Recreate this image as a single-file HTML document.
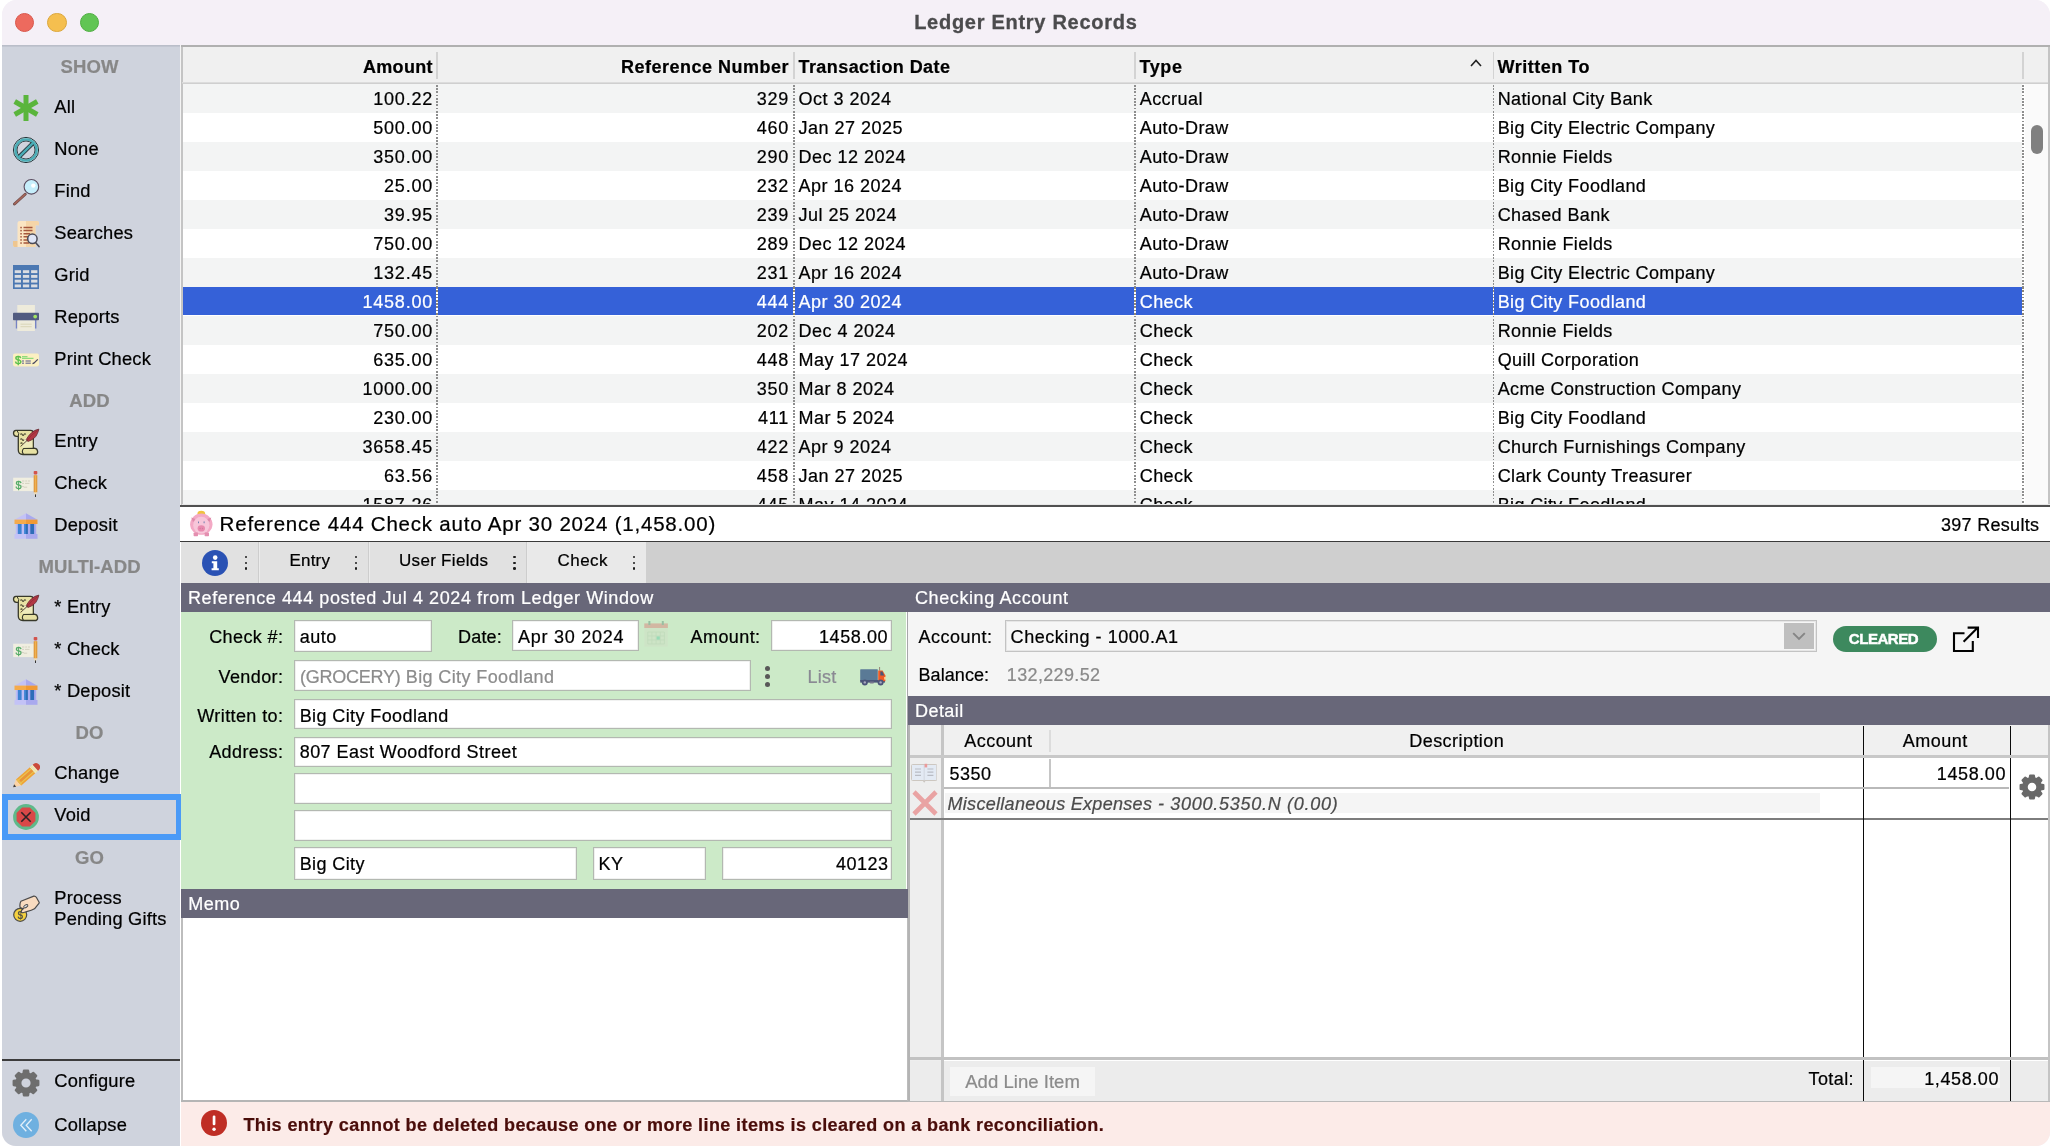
<!DOCTYPE html>
<html lang="en"><head><meta charset="utf-8"><title>Ledger Entry Records</title>
<style>
html,body{margin:0;padding:0;background:#fff;}
body{width:2050px;height:1146px;overflow:hidden;position:relative;font-family:"Liberation Sans",sans-serif;color:#000;}
#win{position:absolute;left:2px;top:0;width:2048px;height:1146px;border-radius:15px 15px 14px 14px;overflow:hidden;background:#f5f0f7;}
#win div,#win svg{position:absolute;box-sizing:border-box;}
.t{white-space:nowrap;-webkit-text-stroke:0.22px currentColor;}
#lay{will-change:transform;}
</style></head>
<body>
<div id="win"><div id="lay" style="left:-2px;top:0;width:2050px;height:1146px;">
<div style="left:0px;top:0px;width:2050px;height:45px;background:#f5f0f7;"></div>
<div style="left:14.850000000000001px;top:12.850000000000001px;width:19.5px;height:19.5px;background:#ed6a5e;border-radius:50%;border:0.8px solid #d9574c;"></div>
<div style="left:47.25px;top:12.850000000000001px;width:19.5px;height:19.5px;background:#f5bf4f;border-radius:50%;border:0.8px solid #dca73b;"></div>
<div style="left:79.65px;top:12.850000000000001px;width:19.5px;height:19.5px;background:#61c554;border-radius:50%;border:0.8px solid #4fae42;"></div>
<div class="t" style="top:12px;font-size:20px;line-height:20px;left:525.5px;width:1000px;text-align:center;text-indent:0.72px;font-weight:bold;color:#4b4b4d;letter-spacing:0.72px;-webkit-text-stroke:0.3px #4b4b4d;">Ledger Entry Records</div>
<div style="left:0px;top:45px;width:180px;height:1101px;background:#cfd3dd;"></div>
<div style="left:0px;top:45px;width:180px;height:1.6px;background:linear-gradient(to bottom,#b6bac5,#c6cad5);"></div>
<div style="left:180px;top:45px;width:1870px;height:1101px;background:#fff;"></div>
<div style="left:180px;top:45px;width:2px;height:462px;background:#f4f4f4;"></div>
<div style="left:182px;top:47px;width:1868px;height:36px;background:#f0f0f0;"></div>
<div style="left:181.3px;top:45px;width:1869px;height:2px;background:#b0b0b0;"></div>
<div style="left:181.3px;top:46.5px;width:1.6px;height:458px;background:#c4c4c4;"></div>
<div style="left:182px;top:82px;width:1868px;height:1px;background:#dcdcdc;"></div>
<div style="left:182px;top:83px;width:1868px;height:1px;background:#cfcfcf;"></div>
<div style="left:436.4px;top:52px;width:1.6px;height:27px;background:#d3d3d3;"></div>
<div style="left:793.2px;top:52px;width:1.6px;height:27px;background:#d3d3d3;"></div>
<div style="left:1134.0px;top:52px;width:1.6px;height:27px;background:#d3d3d3;"></div>
<div style="left:1492.8px;top:52px;width:1.6px;height:27px;background:#d3d3d3;"></div>
<div style="left:2022.3px;top:52px;width:1.6px;height:27px;background:#d3d3d3;"></div>
<div class="t" style="top:58px;font-size:18px;line-height:18px;right:1617.5px;margin-right:-0.3px;font-weight:bold;letter-spacing:0.3px;">Amount</div>
<div class="t" style="top:58px;font-size:18px;line-height:18px;right:1261.5px;margin-right:-0.5px;font-weight:bold;letter-spacing:0.5px;">Reference Number</div>
<div class="t" style="top:58px;font-size:18px;line-height:18px;left:798.5px;font-weight:bold;letter-spacing:0.43px;">Transaction Date</div>
<div class="t" style="top:58px;font-size:18px;line-height:18px;left:1139.5px;font-weight:bold;letter-spacing:0.6px;">Type</div>
<div class="t" style="top:58px;font-size:18px;line-height:18px;left:1497.5px;font-weight:bold;letter-spacing:0.52px;">Written To</div>
<svg style="left:1469px;top:58px" width="14" height="10" viewBox="0 0 14 10"><path d="M2 8 L7 2.5 L12 8" fill="none" stroke="#222" stroke-width="1.6"/></svg>
<div style="left:183px;top:84px;width:1841px;height:420px;overflow:hidden;background:#fff;"><div style="left:0px;top:0px;width:1838.5px;height:29px;background:#f3f4f4;"></div><div class="t" style="right:1591.7px;top:6px;font-size:18px;line-height:18px;letter-spacing:0.8px;margin-right:-0.8px;">100.22</div><div class="t" style="right:1235.7px;top:6px;font-size:18px;line-height:18px;letter-spacing:0.8px;margin-right:-0.8px;">329</div><div class="t" style="left:615.5px;top:6px;font-size:18px;line-height:18px;letter-spacing:0.5px;">Oct 3 2024</div><div class="t" style="left:956.7px;top:6px;font-size:18px;line-height:18px;letter-spacing:0.45px;">Accrual</div><div class="t" style="left:1314.7px;top:6px;font-size:18px;line-height:18px;letter-spacing:0.38px;">National City Bank</div><div class="t" style="right:1591.7px;top:35px;font-size:18px;line-height:18px;letter-spacing:0.8px;margin-right:-0.8px;">500.00</div><div class="t" style="right:1235.7px;top:35px;font-size:18px;line-height:18px;letter-spacing:0.8px;margin-right:-0.8px;">460</div><div class="t" style="left:615.5px;top:35px;font-size:18px;line-height:18px;letter-spacing:0.5px;">Jan 27 2025</div><div class="t" style="left:956.7px;top:35px;font-size:18px;line-height:18px;letter-spacing:0.45px;">Auto-Draw</div><div class="t" style="left:1314.7px;top:35px;font-size:18px;line-height:18px;letter-spacing:0.38px;">Big City Electric Company</div><div style="left:0px;top:58px;width:1838.5px;height:29px;background:#f3f4f4;"></div><div class="t" style="right:1591.7px;top:64px;font-size:18px;line-height:18px;letter-spacing:0.8px;margin-right:-0.8px;">350.00</div><div class="t" style="right:1235.7px;top:64px;font-size:18px;line-height:18px;letter-spacing:0.8px;margin-right:-0.8px;">290</div><div class="t" style="left:615.5px;top:64px;font-size:18px;line-height:18px;letter-spacing:0.5px;">Dec 12 2024</div><div class="t" style="left:956.7px;top:64px;font-size:18px;line-height:18px;letter-spacing:0.45px;">Auto-Draw</div><div class="t" style="left:1314.7px;top:64px;font-size:18px;line-height:18px;letter-spacing:0.38px;">Ronnie Fields</div><div class="t" style="right:1591.7px;top:93px;font-size:18px;line-height:18px;letter-spacing:0.8px;margin-right:-0.8px;">25.00</div><div class="t" style="right:1235.7px;top:93px;font-size:18px;line-height:18px;letter-spacing:0.8px;margin-right:-0.8px;">232</div><div class="t" style="left:615.5px;top:93px;font-size:18px;line-height:18px;letter-spacing:0.5px;">Apr 16 2024</div><div class="t" style="left:956.7px;top:93px;font-size:18px;line-height:18px;letter-spacing:0.45px;">Auto-Draw</div><div class="t" style="left:1314.7px;top:93px;font-size:18px;line-height:18px;letter-spacing:0.38px;">Big City Foodland</div><div style="left:0px;top:116px;width:1838.5px;height:29px;background:#f3f4f4;"></div><div class="t" style="right:1591.7px;top:122px;font-size:18px;line-height:18px;letter-spacing:0.8px;margin-right:-0.8px;">39.95</div><div class="t" style="right:1235.7px;top:122px;font-size:18px;line-height:18px;letter-spacing:0.8px;margin-right:-0.8px;">239</div><div class="t" style="left:615.5px;top:122px;font-size:18px;line-height:18px;letter-spacing:0.5px;">Jul 25 2024</div><div class="t" style="left:956.7px;top:122px;font-size:18px;line-height:18px;letter-spacing:0.45px;">Auto-Draw</div><div class="t" style="left:1314.7px;top:122px;font-size:18px;line-height:18px;letter-spacing:0.38px;">Chased Bank</div><div class="t" style="right:1591.7px;top:151px;font-size:18px;line-height:18px;letter-spacing:0.8px;margin-right:-0.8px;">750.00</div><div class="t" style="right:1235.7px;top:151px;font-size:18px;line-height:18px;letter-spacing:0.8px;margin-right:-0.8px;">289</div><div class="t" style="left:615.5px;top:151px;font-size:18px;line-height:18px;letter-spacing:0.5px;">Dec 12 2024</div><div class="t" style="left:956.7px;top:151px;font-size:18px;line-height:18px;letter-spacing:0.45px;">Auto-Draw</div><div class="t" style="left:1314.7px;top:151px;font-size:18px;line-height:18px;letter-spacing:0.38px;">Ronnie Fields</div><div style="left:0px;top:174px;width:1838.5px;height:29px;background:#f3f4f4;"></div><div class="t" style="right:1591.7px;top:180px;font-size:18px;line-height:18px;letter-spacing:0.8px;margin-right:-0.8px;">132.45</div><div class="t" style="right:1235.7px;top:180px;font-size:18px;line-height:18px;letter-spacing:0.8px;margin-right:-0.8px;">231</div><div class="t" style="left:615.5px;top:180px;font-size:18px;line-height:18px;letter-spacing:0.5px;">Apr 16 2024</div><div class="t" style="left:956.7px;top:180px;font-size:18px;line-height:18px;letter-spacing:0.45px;">Auto-Draw</div><div class="t" style="left:1314.7px;top:180px;font-size:18px;line-height:18px;letter-spacing:0.38px;">Big City Electric Company</div><div style="left:0px;top:203px;width:1838.5px;height:28px;background:#3561d8;"></div><div class="t" style="right:1591.7px;top:209px;font-size:18px;line-height:18px;letter-spacing:0.8px;margin-right:-0.8px;color:#fff;">1458.00</div><div class="t" style="right:1235.7px;top:209px;font-size:18px;line-height:18px;letter-spacing:0.8px;margin-right:-0.8px;color:#fff;">444</div><div class="t" style="left:615.5px;top:209px;font-size:18px;line-height:18px;letter-spacing:0.5px;color:#fff;">Apr 30 2024</div><div class="t" style="left:956.7px;top:209px;font-size:18px;line-height:18px;letter-spacing:0.45px;color:#fff;">Check</div><div class="t" style="left:1314.7px;top:209px;font-size:18px;line-height:18px;letter-spacing:0.38px;color:#fff;">Big City Foodland</div><div style="left:0px;top:232px;width:1838.5px;height:29px;background:#f3f4f4;"></div><div class="t" style="right:1591.7px;top:238px;font-size:18px;line-height:18px;letter-spacing:0.8px;margin-right:-0.8px;">750.00</div><div class="t" style="right:1235.7px;top:238px;font-size:18px;line-height:18px;letter-spacing:0.8px;margin-right:-0.8px;">202</div><div class="t" style="left:615.5px;top:238px;font-size:18px;line-height:18px;letter-spacing:0.5px;">Dec 4 2024</div><div class="t" style="left:956.7px;top:238px;font-size:18px;line-height:18px;letter-spacing:0.45px;">Check</div><div class="t" style="left:1314.7px;top:238px;font-size:18px;line-height:18px;letter-spacing:0.38px;">Ronnie Fields</div><div class="t" style="right:1591.7px;top:267px;font-size:18px;line-height:18px;letter-spacing:0.8px;margin-right:-0.8px;">635.00</div><div class="t" style="right:1235.7px;top:267px;font-size:18px;line-height:18px;letter-spacing:0.8px;margin-right:-0.8px;">448</div><div class="t" style="left:615.5px;top:267px;font-size:18px;line-height:18px;letter-spacing:0.5px;">May 17 2024</div><div class="t" style="left:956.7px;top:267px;font-size:18px;line-height:18px;letter-spacing:0.45px;">Check</div><div class="t" style="left:1314.7px;top:267px;font-size:18px;line-height:18px;letter-spacing:0.38px;">Quill Corporation</div><div style="left:0px;top:290px;width:1838.5px;height:29px;background:#f3f4f4;"></div><div class="t" style="right:1591.7px;top:296px;font-size:18px;line-height:18px;letter-spacing:0.8px;margin-right:-0.8px;">1000.00</div><div class="t" style="right:1235.7px;top:296px;font-size:18px;line-height:18px;letter-spacing:0.8px;margin-right:-0.8px;">350</div><div class="t" style="left:615.5px;top:296px;font-size:18px;line-height:18px;letter-spacing:0.5px;">Mar 8 2024</div><div class="t" style="left:956.7px;top:296px;font-size:18px;line-height:18px;letter-spacing:0.45px;">Check</div><div class="t" style="left:1314.7px;top:296px;font-size:18px;line-height:18px;letter-spacing:0.38px;">Acme Construction Company</div><div class="t" style="right:1591.7px;top:325px;font-size:18px;line-height:18px;letter-spacing:0.8px;margin-right:-0.8px;">230.00</div><div class="t" style="right:1235.7px;top:325px;font-size:18px;line-height:18px;letter-spacing:0.8px;margin-right:-0.8px;">411</div><div class="t" style="left:615.5px;top:325px;font-size:18px;line-height:18px;letter-spacing:0.5px;">Mar 5 2024</div><div class="t" style="left:956.7px;top:325px;font-size:18px;line-height:18px;letter-spacing:0.45px;">Check</div><div class="t" style="left:1314.7px;top:325px;font-size:18px;line-height:18px;letter-spacing:0.38px;">Big City Foodland</div><div style="left:0px;top:348px;width:1838.5px;height:29px;background:#f3f4f4;"></div><div class="t" style="right:1591.7px;top:354px;font-size:18px;line-height:18px;letter-spacing:0.8px;margin-right:-0.8px;">3658.45</div><div class="t" style="right:1235.7px;top:354px;font-size:18px;line-height:18px;letter-spacing:0.8px;margin-right:-0.8px;">422</div><div class="t" style="left:615.5px;top:354px;font-size:18px;line-height:18px;letter-spacing:0.5px;">Apr 9 2024</div><div class="t" style="left:956.7px;top:354px;font-size:18px;line-height:18px;letter-spacing:0.45px;">Check</div><div class="t" style="left:1314.7px;top:354px;font-size:18px;line-height:18px;letter-spacing:0.38px;">Church Furnishings Company</div><div class="t" style="right:1591.7px;top:383px;font-size:18px;line-height:18px;letter-spacing:0.8px;margin-right:-0.8px;">63.56</div><div class="t" style="right:1235.7px;top:383px;font-size:18px;line-height:18px;letter-spacing:0.8px;margin-right:-0.8px;">458</div><div class="t" style="left:615.5px;top:383px;font-size:18px;line-height:18px;letter-spacing:0.5px;">Jan 27 2025</div><div class="t" style="left:956.7px;top:383px;font-size:18px;line-height:18px;letter-spacing:0.45px;">Check</div><div class="t" style="left:1314.7px;top:383px;font-size:18px;line-height:18px;letter-spacing:0.38px;">Clark County Treasurer</div><div style="left:0px;top:406px;width:1838.5px;height:29px;background:#f3f4f4;"></div><div class="t" style="right:1591.7px;top:412px;font-size:18px;line-height:18px;letter-spacing:0.8px;margin-right:-0.8px;">1587.26</div><div class="t" style="right:1235.7px;top:412px;font-size:18px;line-height:18px;letter-spacing:0.8px;margin-right:-0.8px;">445</div><div class="t" style="left:615.5px;top:412px;font-size:18px;line-height:18px;letter-spacing:0.5px;">May 14 2024</div><div class="t" style="left:956.7px;top:412px;font-size:18px;line-height:18px;letter-spacing:0.45px;">Check</div><div class="t" style="left:1314.7px;top:412px;font-size:18px;line-height:18px;letter-spacing:0.38px;">Big City Foodland</div><div style="left:253.39999999999998px;top:1px;width:1.6px;height:420px;background:repeating-linear-gradient(to bottom,#8e8e8e 0,#8e8e8e 1.6px,transparent 1.6px,transparent 3.25px);"></div><div style="left:253.39999999999998px;top:203px;width:1.6px;height:28px;background:repeating-linear-gradient(to bottom,#8c8678 0,#8c8678 1.6px,#fff 1.6px,#fff 3.25px);"></div><div style="left:610.2px;top:1px;width:1.6px;height:420px;background:repeating-linear-gradient(to bottom,#8e8e8e 0,#8e8e8e 1.6px,transparent 1.6px,transparent 3.25px);"></div><div style="left:610.2px;top:203px;width:1.6px;height:28px;background:repeating-linear-gradient(to bottom,#8c8678 0,#8c8678 1.6px,#fff 1.6px,#fff 3.25px);"></div><div style="left:951.0px;top:1px;width:1.6px;height:420px;background:repeating-linear-gradient(to bottom,#8e8e8e 0,#8e8e8e 1.6px,transparent 1.6px,transparent 3.25px);"></div><div style="left:951.0px;top:203px;width:1.6px;height:28px;background:repeating-linear-gradient(to bottom,#8c8678 0,#8c8678 1.6px,#fff 1.6px,#fff 3.25px);"></div><div style="left:1309.8px;top:1px;width:1.6px;height:420px;background:repeating-linear-gradient(to bottom,#8e8e8e 0,#8e8e8e 1.6px,transparent 1.6px,transparent 3.25px);"></div><div style="left:1309.8px;top:203px;width:1.6px;height:28px;background:repeating-linear-gradient(to bottom,#8c8678 0,#8c8678 1.6px,#fff 1.6px,#fff 3.25px);"></div><div style="left:1839.3px;top:1px;width:1.6px;height:420px;background:repeating-linear-gradient(to bottom,#8e8e8e 0,#8e8e8e 1.6px,transparent 1.6px,transparent 3.25px);"></div><div style="left:1839.3px;top:203px;width:1.6px;height:28px;background:repeating-linear-gradient(to bottom,#8c8678 0,#8c8678 1.6px,#fff 1.6px,#fff 3.25px);"></div></div>
<div style="left:2025px;top:84px;width:23px;height:420px;background:#fafafa;"></div>
<div style="left:2030.7px;top:125px;width:12.6px;height:29px;background:#808080;border-radius:6.3px;"></div>
<div style="left:2048px;top:47px;width:2px;height:458px;background:#c4c4c4;"></div>
<div style="left:182px;top:504px;width:1868px;height:1px;background:#e8e8e8;"></div>
<div style="left:180px;top:505px;width:1870px;height:2px;background:#505050;"></div>
<div class="t" style="top:58px;font-size:18.5px;line-height:18.5px;left:-410.5px;width:1000px;text-align:center;text-indent:0.1px;font-weight:bold;color:#878787;letter-spacing:0.1px;">SHOW</div>
<svg style="left:12.2px;top:94.1px;" width="28.0" height="28.0" viewBox="0 0 28 28"><g fill="#5ab53c"><rect x="11.5" y="1" width="5" height="26"/><rect x="11.5" y="1" width="5" height="26" transform="rotate(60 14 14)"/><rect x="11.5" y="1" width="5" height="26" transform="rotate(-60 14 14)"/></g></svg>
<div class="t" style="top:98px;font-size:18.3px;line-height:18.3px;left:54.3px;letter-spacing:0.2px;">All</div>
<svg style="left:12.2px;top:136.1px;" width="28.0" height="28.0" viewBox="0 0 28 28"><circle cx="14" cy="14" r="12.6" fill="#c9e9ed" stroke="#26363b" stroke-width="1"/><circle cx="14" cy="14" r="10.6" fill="none" stroke="#4badb6" stroke-width="2.4"/><circle cx="14" cy="14" r="9" fill="#cfd3dd" stroke="#26363b" stroke-width="0.9"/><path d="M7.4 20.6 L20.6 7.4" stroke="#26363b" stroke-width="4.2"/><path d="M6.9 21.1 L21.1 6.9" stroke="#4badb6" stroke-width="2.4"/></svg>
<div class="t" style="top:140px;font-size:18.3px;line-height:18.3px;left:54.3px;letter-spacing:0.2px;">None</div>
<svg style="left:12.2px;top:178.1px;" width="28.0" height="28.0" viewBox="0 0 28 28"><path d="M2.5 26 L13.2 16.2" stroke="#6b4a48" stroke-width="2.9" stroke-linecap="round"/><path d="M2.7 25.8 L13 16.4" stroke="#a5665a" stroke-width="1.6" stroke-linecap="round"/><circle cx="19.4" cy="8.8" r="7.3" fill="#c6eefb" stroke="#5b4d60" stroke-width="1.1"/><circle cx="21.3" cy="7.6" r="2.2" fill="#fff"/></svg>
<div class="t" style="top:182px;font-size:18.3px;line-height:18.3px;left:54.3px;letter-spacing:0.2px;">Find</div>
<svg style="left:12.2px;top:220.1px;" width="28.0" height="28.0" viewBox="0 0 28 28"><path d="M5.5 3 Q5.5 1 8 1 L25 1 Q27 1 27 3 L27 5.2 L23.5 5.2 L23.5 27 L2.5 27 Q1 27 1 25 L1 21 L5.5 21 Z" fill="#fbe5c3"/><path d="M14 1 L25 1 Q27 1 27 3 L27 5.2 L23.5 5.2 L23.5 27 L14 27 Z" fill="#f3cf9f" opacity="0.75"/><path d="M1 21 L5.5 21 L5.5 27 L2.5 27 Q1 27 1 25Z" fill="#eec690"/><g stroke="#a5563c" stroke-width="1.5"><path d="M11.5 7.5H20.5M11.5 10.6H20.5M11.5 13.7H18M11.5 16.8H16M11.5 19.9H16M11.5 23H17"/></g><g fill="#a5563c"><rect x="8.3" y="6.8" width="1.5" height="1.5"/><rect x="8.3" y="9.9" width="1.5" height="1.5"/><rect x="8.3" y="13" width="1.5" height="1.5"/><rect x="8.3" y="16.1" width="1.5" height="1.5"/><rect x="8.3" y="19.2" width="1.5" height="1.5"/><rect x="8.3" y="22.3" width="1.5" height="1.5"/></g><path d="M23.5 22.5 L27 26.6" stroke="#4a4a57" stroke-width="1.6" stroke-linecap="round"/><circle cx="20.4" cy="18.8" r="4.7" fill="#dfe5f6" stroke="#4a4a57" stroke-width="1.5"/></svg>
<div class="t" style="top:224px;font-size:18.3px;line-height:18.3px;left:54.3px;letter-spacing:0.2px;">Searches</div>
<svg style="left:12.2px;top:262.1px;" width="28.0" height="28.0" viewBox="0 0 28 28"><rect x="1" y="3" width="26" height="24" fill="#4c78b2"/><rect x="2.7" y="8.2" width="6.3" height="2.9" fill="#dadde2"/><rect x="10.899999999999999" y="8.2" width="6.3" height="2.9" fill="#dadde2"/><rect x="19.099999999999998" y="8.2" width="6.3" height="2.9" fill="#dadde2"/><rect x="2.7" y="12.95" width="6.3" height="2.9" fill="#dadde2"/><rect x="10.899999999999999" y="12.95" width="6.3" height="2.9" fill="#dadde2"/><rect x="19.099999999999998" y="12.95" width="6.3" height="2.9" fill="#dadde2"/><rect x="2.7" y="17.7" width="6.3" height="2.9" fill="#dadde2"/><rect x="10.899999999999999" y="17.7" width="6.3" height="2.9" fill="#dadde2"/><rect x="19.099999999999998" y="17.7" width="6.3" height="2.9" fill="#dadde2"/><rect x="2.7" y="22.45" width="6.3" height="2.9" fill="#dadde2"/><rect x="10.899999999999999" y="22.45" width="6.3" height="2.9" fill="#dadde2"/><rect x="19.099999999999998" y="22.45" width="6.3" height="2.9" fill="#dadde2"/></svg>
<div class="t" style="top:266px;font-size:18.3px;line-height:18.3px;left:54.3px;letter-spacing:0.2px;">Grid</div>
<svg style="left:12.2px;top:304.1px;" width="28.0" height="28.0" viewBox="0 0 28 28"><rect x="5.3" y="1" width="17.6" height="9" fill="#eeebdb"/><rect x="1" y="16" width="26" height="7" fill="#d2d3d4"/><rect x="3.8" y="16" width="1.6" height="8.5" fill="#7683c4"/><rect x="22.8" y="16" width="1.6" height="8.5" fill="#7683c4"/><rect x="5.3" y="16.5" width="17.6" height="10.5" fill="#eeebdb"/><path d="M8.5 20.2H19.7M8.5 22.7H19.7" stroke="#d9d5b8" stroke-width="1"/><rect x="1" y="8.8" width="26" height="7.4" rx="0.8" fill="#515b80"/><circle cx="23.2" cy="12.6" r="1.9" fill="#a2e463"/></svg>
<div class="t" style="top:308px;font-size:18.3px;line-height:18.3px;left:54.3px;letter-spacing:0.2px;">Reports</div>
<svg style="left:12.2px;top:346.1px;" width="28.0" height="28.0" viewBox="0 0 28 28"><rect x="1" y="7.6" width="26" height="12.8" rx="1.8" fill="#fbf0c1"/><text x="3" y="18" font-family="Liberation Sans,sans-serif" font-size="11.5" fill="#57c04a" stroke="#57c04a" stroke-width="0.45">$</text><path d="M10 10.6H15.5M10 12.4H21.5" stroke="#8fdc7c" stroke-width="1.3"/><path d="M10 15H12M13.5 15H18.8M10 17.3H12M13.5 17.3H18.8" stroke="#8d8c9f" stroke-width="1.5"/><path d="M20.5 17.6 q1.5 -0.2 2.2 -1.2 L25.8 13.4" stroke="#4a4760" stroke-width="1.3" fill="none"/></svg>
<div class="t" style="top:350px;font-size:18.3px;line-height:18.3px;left:54.3px;letter-spacing:0.2px;">Print Check</div>
<div class="t" style="top:392px;font-size:18.5px;line-height:18.5px;left:-410.5px;width:1000px;text-align:center;text-indent:0.1px;font-weight:bold;color:#878787;letter-spacing:0.1px;">ADD</div>
<div style="left:0;top:0.0px;width:60px;height:500px;overflow:visible;"><svg style="left:12.0px;top:428.0px;" width="28.0" height="28.0" viewBox="12 428 28 28"><path d="M18.3 436.4 L18.3 450 Q18.3 454.5 23 454.5 L36 454.5 Q37.9 454 37.6 451.4 Q37.3 448.5 35 448.3 L33.3 448.3 L33.3 433.2 Q33.3 430.4 30.5 430.4 L16 430.4 Q13.5 430.6 13.5 433.3 Q13.7 436.3 16.4 436.4 Z" fill="#e7e1a3" stroke="#37382a" stroke-width="1.3" stroke-linejoin="round"/><path d="M24.5 438 L32.4 438 L32.4 447.6 L22 447.6 Z" fill="#f0ecc2" opacity="0.8"/><path d="M23.4 454.2 Q21.2 451.4 23.6 448.5 L35 448.4" fill="none" stroke="#37382a" stroke-width="1.1"/><path d="M18.3 436.2 Q19.6 433.4 17.2 431" fill="none" stroke="#37382a" stroke-width="1"/><path d="M20.4 434.6 q0.9-1.8 1.8 0 t1.8 0 t1.8 0 M20.4 439.6 q0.9-1.8 1.8 0 t1.8 0 M20.6 443.6 q0.9-1.4 1.8 0" stroke="#4a4834" stroke-width="1.1" fill="none"/><path d="M38.8 429.1 Q31 430.6 26.2 439.6 Q26.8 441.2 28.2 441.4 Q35.4 439 37.4 433.6 Q38.6 431 38.8 429.1Z" fill="#b23844" stroke="#5a2028" stroke-width="0.7"/><path d="M37.6 430.6 Q31 434.6 27.2 440.4" stroke="#8c2a35" stroke-width="0.7" fill="none"/><path d="M27.6 440 L20.6 446.4" stroke="#4a3a30" stroke-width="0.9" fill="none"/></svg></div>
<div class="t" style="top:432px;font-size:18.3px;line-height:18.3px;left:54.3px;letter-spacing:0.2px;">Entry</div>
<svg style="left:12.2px;top:471.1px;" width="28.0" height="28.0" viewBox="0 0 28 28"><rect x="1.2" y="6.7" width="20.6" height="13.4" fill="#f0eee0"/><text x="3.4" y="17.6" font-family="Liberation Sans,sans-serif" font-size="11" fill="#4da862" stroke="#4da862" stroke-width="0.3">$</text><path d="M10 10h2.4M13.2 10h2M16 10h2M10 12.4h2M13 12.4h4.5M9.6 16.2 l1.4-1.2 l0.8 1.2h3.4" stroke="#d3d2c0" stroke-width="1" fill="none"/><rect x="21.7" y="0" width="3.6" height="3.4" rx="0.8" fill="#d2534c"/><rect x="21.7" y="4.2" width="3.6" height="17.2" fill="#e0993a"/><rect x="22.9" y="4.2" width="1.2" height="17.2" fill="#efb152"/><path d="M21.7 21.4 L25.3 21.4 L23.5 25 Z" fill="#f2ddb4"/><path d="M23.5 23.4 v2.6" stroke="#333" stroke-width="1"/></svg>
<div class="t" style="top:474px;font-size:18.3px;line-height:18.3px;left:54.3px;letter-spacing:0.2px;">Check</div>
<svg style="left:12.2px;top:512.1px;" width="28.0" height="28.0" viewBox="0 0 28 28"><path d="M14 1.2 L2.5 7.8 H14Z" fill="#c3c2f6"/><path d="M14 1.2 L25.5 7.8 H14Z" fill="#a9a9ee"/><rect x="3.8" y="11.5" width="10.2" height="11" fill="#bdbcf5"/><rect x="14" y="11.5" width="10.2" height="11" fill="#aaa9ee"/><rect x="2.5" y="7.6" width="11.5" height="4.4" fill="#f5ab4c"/><rect x="14" y="7.6" width="11.5" height="4.4" fill="#f19a35"/><rect x="5.8" y="12" width="3.8" height="10" fill="#3d83d3"/><rect x="12.1" y="12" width="1.9" height="10" fill="#3d83d3"/><rect x="14" y="12" width="1.9" height="10" fill="#2e6db8"/><rect x="18.3" y="12" width="3.8" height="10" fill="#2e6db8"/><rect x="2.5" y="22" width="11.5" height="4.8" fill="#c3c2f6"/><rect x="14" y="22" width="11.5" height="4.8" fill="#a9a9ee"/></svg>
<div class="t" style="top:516px;font-size:18.3px;line-height:18.3px;left:54.3px;letter-spacing:0.2px;">Deposit</div>
<div class="t" style="top:558px;font-size:18.5px;line-height:18.5px;left:-410.5px;width:1000px;text-align:center;text-indent:0.1px;font-weight:bold;color:#878787;letter-spacing:0.1px;">MULTI-ADD</div>
<div style="left:0;top:166.0px;width:60px;height:500px;overflow:visible;"><svg style="left:12.0px;top:428.0px;" width="28.0" height="28.0" viewBox="12 428 28 28"><path d="M18.3 436.4 L18.3 450 Q18.3 454.5 23 454.5 L36 454.5 Q37.9 454 37.6 451.4 Q37.3 448.5 35 448.3 L33.3 448.3 L33.3 433.2 Q33.3 430.4 30.5 430.4 L16 430.4 Q13.5 430.6 13.5 433.3 Q13.7 436.3 16.4 436.4 Z" fill="#e7e1a3" stroke="#37382a" stroke-width="1.3" stroke-linejoin="round"/><path d="M24.5 438 L32.4 438 L32.4 447.6 L22 447.6 Z" fill="#f0ecc2" opacity="0.8"/><path d="M23.4 454.2 Q21.2 451.4 23.6 448.5 L35 448.4" fill="none" stroke="#37382a" stroke-width="1.1"/><path d="M18.3 436.2 Q19.6 433.4 17.2 431" fill="none" stroke="#37382a" stroke-width="1"/><path d="M20.4 434.6 q0.9-1.8 1.8 0 t1.8 0 t1.8 0 M20.4 439.6 q0.9-1.8 1.8 0 t1.8 0 M20.6 443.6 q0.9-1.4 1.8 0" stroke="#4a4834" stroke-width="1.1" fill="none"/><path d="M38.8 429.1 Q31 430.6 26.2 439.6 Q26.8 441.2 28.2 441.4 Q35.4 439 37.4 433.6 Q38.6 431 38.8 429.1Z" fill="#b23844" stroke="#5a2028" stroke-width="0.7"/><path d="M37.6 430.6 Q31 434.6 27.2 440.4" stroke="#8c2a35" stroke-width="0.7" fill="none"/><path d="M27.6 440 L20.6 446.4" stroke="#4a3a30" stroke-width="0.9" fill="none"/></svg></div>
<div class="t" style="top:598px;font-size:18.3px;line-height:18.3px;left:54.3px;letter-spacing:0.2px;">* Entry</div>
<svg style="left:12.2px;top:637.1px;" width="28.0" height="28.0" viewBox="0 0 28 28"><rect x="1.2" y="6.7" width="20.6" height="13.4" fill="#f0eee0"/><text x="3.4" y="17.6" font-family="Liberation Sans,sans-serif" font-size="11" fill="#4da862" stroke="#4da862" stroke-width="0.3">$</text><path d="M10 10h2.4M13.2 10h2M16 10h2M10 12.4h2M13 12.4h4.5M9.6 16.2 l1.4-1.2 l0.8 1.2h3.4" stroke="#d3d2c0" stroke-width="1" fill="none"/><rect x="21.7" y="0" width="3.6" height="3.4" rx="0.8" fill="#d2534c"/><rect x="21.7" y="4.2" width="3.6" height="17.2" fill="#e0993a"/><rect x="22.9" y="4.2" width="1.2" height="17.2" fill="#efb152"/><path d="M21.7 21.4 L25.3 21.4 L23.5 25 Z" fill="#f2ddb4"/><path d="M23.5 23.4 v2.6" stroke="#333" stroke-width="1"/></svg>
<div class="t" style="top:640px;font-size:18.3px;line-height:18.3px;left:54.3px;letter-spacing:0.2px;">* Check</div>
<svg style="left:12.2px;top:678.1px;" width="28.0" height="28.0" viewBox="0 0 28 28"><path d="M14 1.2 L2.5 7.8 H14Z" fill="#c3c2f6"/><path d="M14 1.2 L25.5 7.8 H14Z" fill="#a9a9ee"/><rect x="3.8" y="11.5" width="10.2" height="11" fill="#bdbcf5"/><rect x="14" y="11.5" width="10.2" height="11" fill="#aaa9ee"/><rect x="2.5" y="7.6" width="11.5" height="4.4" fill="#f5ab4c"/><rect x="14" y="7.6" width="11.5" height="4.4" fill="#f19a35"/><rect x="5.8" y="12" width="3.8" height="10" fill="#3d83d3"/><rect x="12.1" y="12" width="1.9" height="10" fill="#3d83d3"/><rect x="14" y="12" width="1.9" height="10" fill="#2e6db8"/><rect x="18.3" y="12" width="3.8" height="10" fill="#2e6db8"/><rect x="2.5" y="22" width="11.5" height="4.8" fill="#c3c2f6"/><rect x="14" y="22" width="11.5" height="4.8" fill="#a9a9ee"/></svg>
<div class="t" style="top:682px;font-size:18.3px;line-height:18.3px;left:54.3px;letter-spacing:0.2px;">* Deposit</div>
<div class="t" style="top:724px;font-size:18.5px;line-height:18.5px;left:-410.5px;width:1000px;text-align:center;text-indent:0.1px;font-weight:bold;color:#878787;letter-spacing:0.1px;">DO</div>
<svg style="left:12.1px;top:762px;" width="28.0" height="28.0" viewBox="0 0 28 28"><g transform="rotate(-41.3 14 14)"><path d="M-3.2 14 L4.2 9.95 V18.05Z" fill="#fbd3a6"/><path d="M-3.2 14 L-0.4 12.45 V15.55Z" fill="#3d3d42"/><rect x="4.2" y="9.95" width="18.6" height="8.1" fill="#f0a233"/><rect x="4.2" y="11.5" width="18.6" height="1.25" fill="#e9c352"/><rect x="4.2" y="12.75" width="18.6" height="2.5" fill="#e8943a"/><rect x="4.2" y="15.25" width="18.6" height="1.25" fill="#e9c352"/><path d="M4.2 9.95 L6.2 11.5 L6.2 16.5 L4.2 18.05Z" fill="#e9c352" opacity="0.8"/><rect x="22.8" y="9.95" width="3.6" height="8.1" fill="#f3eec2"/><path d="M23.7 9.95v8.1M24.9 9.95v8.1" stroke="#e6dc9a" stroke-width="0.6"/><path d="M26.4 9.95 H27.6 Q31.4 10.4 31.4 14 Q31.4 17.6 27.6 18.05 H26.4Z" fill="#cb4a3b"/></g></svg>
<div class="t" style="top:764px;font-size:18.3px;line-height:18.3px;left:54.3px;letter-spacing:0.2px;">Change</div>
<div style="left:2px;top:794px;width:180px;height:45.6px;border:6px solid #4a9af7;"></div>
<svg style="left:12.2px;top:802.6px;" width="28.0" height="28.0" viewBox="0 0 28 28"><circle cx="14" cy="14" r="12.9" fill="#5fb98a"/><polygon points="23.42,17.90 17.90,23.42 10.10,23.42 4.58,17.90 4.58,10.10 10.10,4.58 17.90,4.58 23.42,10.10" fill="#da4848"/><path d="M9.3 9.3 L18.7 18.7 M18.7 9.3 L9.3 18.7" stroke="#2d2326" stroke-width="1.6"/></svg>
<div class="t" style="top:806px;font-size:18.3px;line-height:18.3px;left:54.3px;letter-spacing:0.2px;">Void</div>
<div class="t" style="top:849px;font-size:18.5px;line-height:18.5px;left:-410.5px;width:1000px;text-align:center;text-indent:0.1px;font-weight:bold;color:#878787;letter-spacing:0.1px;">GO</div>
<svg style="left:12.0px;top:894.0px;" width="28.0" height="28.0" viewBox="12 894 28 28"><circle cx="20.2" cy="914.8" r="6.5" fill="#f5d13f" stroke="#4b4b4b" stroke-width="1.2"/><text x="17.5" y="918.6" font-family="Liberation Sans,sans-serif" font-weight="bold" font-size="10" fill="#5a5640">$</text><path d="M19.9 906.1 Q19.8 903 20.9 901.2 L33.8 896.1 Q35.4 895.9 36.3 897.3 L39.1 902.2 Q39.4 903 38.7 903.6 L34.5 908.8 Q31.5 910.6 27.5 911.3 L23 912.7 Q21.4 912.9 21.3 912 Q21.2 911 21.6 910.2 L23.4 908.5 Q21.2 908.6 20.2 907.5 Z" fill="#f8dbc0" stroke="#4b4b4b" stroke-width="1.2" stroke-linejoin="round"/><ellipse cx="25.8" cy="906.2" rx="2.3" ry="1.2" transform="rotate(-32 25.8 906.2)" fill="#dfe3ea" stroke="#4b4b4b" stroke-width="1"/></svg>
<div class="t" style="top:889px;font-size:18.3px;line-height:18.3px;left:54.3px;letter-spacing:0.2px;">Process</div>
<div class="t" style="top:910px;font-size:18.3px;line-height:18.3px;left:54.3px;letter-spacing:0.2px;">Pending Gifts</div>
<div style="left:2px;top:1058.5px;width:178px;height:2px;background:#3c3c3c;"></div>
<svg style="left:12.2px;top:1068.6px;" width="28.0" height="28.0" viewBox="0 0 28 28"><path d="M11.41 4.65 L11.89 1.68 L16.11 1.68 L16.59 4.65 L18.78 5.56 L21.22 3.79 L24.21 6.78 L22.44 9.22 L23.35 11.41 L26.32 11.89 L26.32 16.11 L23.35 16.59 L22.44 18.78 L24.21 21.22 L21.22 24.21 L18.78 22.44 L16.59 23.35 L16.11 26.32 L11.89 26.32 L11.41 23.35 L9.22 22.44 L6.78 24.21 L3.79 21.22 L5.56 18.78 L4.65 16.59 L1.68 16.11 L1.68 11.89 L4.65 11.41 L5.56 9.22 L3.79 6.78 L6.78 3.79 L9.22 5.56Z M18.6 14 A4.6 4.6 0 1 0 9.4 14 A4.6 4.6 0 1 0 18.6 14Z" fill="#6e6e6e" fill-rule="evenodd"/><path d="M11.41 4.65 L11.89 1.68 L16.11 1.68 L16.59 4.65 L18.78 5.56 L21.22 3.79 L24.21 6.78 L22.44 9.22 L23.35 11.41 L26.32 11.89 L26.32 16.11 L23.35 16.59 L22.44 18.78 L24.21 21.22 L21.22 24.21 L18.78 22.44 L16.59 23.35 L16.11 26.32 L11.89 26.32 L11.41 23.35 L9.22 22.44 L6.78 24.21 L3.79 21.22 L5.56 18.78 L4.65 16.59 L1.68 16.11 L1.68 11.89 L4.65 11.41 L5.56 9.22 L3.79 6.78 L6.78 3.79 L9.22 5.56Z" fill="none" stroke="#6e6e6e" stroke-width="2.2" stroke-linejoin="round"/></svg>
<div class="t" style="top:1072px;font-size:18.3px;line-height:18.3px;left:54.3px;letter-spacing:0.2px;">Configure</div>
<svg style="left:12.2px;top:1110.9px;" width="28.0" height="28.0" viewBox="0 0 28 28"><circle cx="14" cy="14" r="13" fill="#6fb0e0"/><path d="M14.3 8.2 L8.8 14.2 L14.3 20.2 M19.7 8.2 L14.2 14.2 L19.7 20.2" fill="none" stroke="#e2effa" stroke-width="1.3" stroke-linejoin="miter"/></svg>
<div class="t" style="top:1116px;font-size:18.3px;line-height:18.3px;left:54.3px;letter-spacing:0.2px;">Collapse</div>
<div style="left:180px;top:507px;width:1870px;height:34px;background:#fff;"></div>
<svg style="left:188.5px;top:509.5px;" width="24.5" height="27" viewBox="0 0 24.5 27"><ellipse cx="12.3" cy="4" rx="3.9" ry="3.3" fill="#efc23e"/><ellipse cx="12.3" cy="14.2" rx="11.2" ry="10.6" fill="#f3a9c5"/><path d="M2.3 7.5 L7 9.2 L4 12Z M22.3 7.5 L17.6 9.2 L20.6 12Z" fill="#dd8aaa"/><ellipse cx="12.3" cy="15.2" rx="8.1" ry="8.4" fill="#f7c6d9"/><rect x="4.6" y="22.6" width="4.4" height="3.7" rx="0.7" fill="#e48fb0"/><rect x="15.6" y="22.6" width="4.4" height="3.7" rx="0.7" fill="#e48fb0"/><ellipse cx="12.3" cy="18.4" rx="3.7" ry="3.1" fill="#e88aae"/><circle cx="11.1" cy="18.5" r="0.7" fill="#d4799f"/><circle cx="13.5" cy="18.5" r="0.7" fill="#d4799f"/><rect x="9" y="11.3" width="1" height="2" rx="0.4" fill="#7080b0"/><rect x="14.6" y="11.3" width="1" height="2" rx="0.4" fill="#7080b0"/></svg>
<div class="t" style="top:514px;font-size:20.5px;line-height:20.5px;left:219.6px;letter-spacing:0.79px;">Reference 444 Check auto Apr 30 2024 (1,458.00)</div>
<div class="t" style="top:516px;font-size:18px;line-height:18px;right:11px;margin-right:-0.3px;letter-spacing:0.3px;">397 Results</div>
<div style="left:180px;top:540.7px;width:1870px;height:1.6px;background:#3a3a3a;"></div>
<div style="left:181.3px;top:542.3px;width:1869px;height:40.3px;background:#cfcfcf;"></div>
<div style="left:181.3px;top:542.3px;width:346.5px;height:40.3px;background:#e1e1e1;"></div>
<div style="left:527.7px;top:542.3px;width:118.5px;height:40.3px;background:#e9e9e9;"></div>
<div style="left:257.5px;top:542.3px;width:2.2px;height:40.3px;background:linear-gradient(to right,#cdcdcd 0,#cdcdcd 50%,#ebebeb 50%,#ebebeb 100%);"></div>
<div style="left:368.0px;top:542.3px;width:2.2px;height:40.3px;background:linear-gradient(to right,#cdcdcd 0,#cdcdcd 50%,#ebebeb 50%,#ebebeb 100%);"></div>
<div style="left:525.9000000000001px;top:542.3px;width:2.2px;height:40.3px;background:linear-gradient(to right,#cdcdcd 0,#cdcdcd 50%,#ebebeb 50%,#ebebeb 100%);"></div>
<svg style="left:202.2px;top:550px;" width="26" height="26" viewBox="0 0 26 26"><circle cx="13" cy="13" r="13" fill="#2a52b4"/><circle cx="13.2" cy="7.6" r="2.3" fill="#fff"/><path d="M9.8 11.2 H15.2 V18.2 H16.8 V20.3 H9.6 V18.2 H11.4 V13.3 H9.8Z" fill="#fff"/></svg>
<div style="left:244.7px;top:555.8px;width:2.6px;height:2.6px;background:#1c1c1c;border-radius:50%;"></div>
<div style="left:244.7px;top:561.5px;width:2.6px;height:2.6px;background:#1c1c1c;border-radius:50%;"></div>
<div style="left:244.7px;top:567.3px;width:2.6px;height:2.6px;background:#1c1c1c;border-radius:50%;"></div>
<div style="left:354.5px;top:555.8px;width:2.6px;height:2.6px;background:#1c1c1c;border-radius:50%;"></div>
<div style="left:354.5px;top:561.5px;width:2.6px;height:2.6px;background:#1c1c1c;border-radius:50%;"></div>
<div style="left:354.5px;top:567.3px;width:2.6px;height:2.6px;background:#1c1c1c;border-radius:50%;"></div>
<div style="left:513.2px;top:555.8px;width:2.6px;height:2.6px;background:#1c1c1c;border-radius:50%;"></div>
<div style="left:513.2px;top:561.5px;width:2.6px;height:2.6px;background:#1c1c1c;border-radius:50%;"></div>
<div style="left:513.2px;top:567.3px;width:2.6px;height:2.6px;background:#1c1c1c;border-radius:50%;"></div>
<div style="left:632.5px;top:555.8px;width:2.6px;height:2.6px;background:#1c1c1c;border-radius:50%;"></div>
<div style="left:632.5px;top:561.5px;width:2.6px;height:2.6px;background:#1c1c1c;border-radius:50%;"></div>
<div style="left:632.5px;top:567.3px;width:2.6px;height:2.6px;background:#1c1c1c;border-radius:50%;"></div>
<div class="t" style="top:552px;font-size:17px;line-height:17px;left:289.5px;letter-spacing:0.2px;">Entry</div>
<div class="t" style="top:552px;font-size:17px;line-height:17px;left:399px;letter-spacing:0.3px;">User Fields</div>
<div class="t" style="top:552px;font-size:17px;line-height:17px;left:557.5px;letter-spacing:0.45px;">Check</div>
<div style="left:181.3px;top:582.5px;width:1869px;height:29px;background:#686779;"></div>
<div class="t" style="top:589px;font-size:18px;line-height:18px;left:188px;color:#fff;letter-spacing:0.59px;">Reference 444 posted Jul 4 2024 from Ledger Window</div>
<div class="t" style="top:589px;font-size:18px;line-height:18px;left:915px;color:#fff;letter-spacing:0.6px;">Checking Account</div>
<div style="left:181.3px;top:611.5px;width:725.2px;height:278px;background:#cceac8;"></div>
<div style="left:294px;top:620px;width:138px;height:31.5px;background:#fff;border:1px solid #b3b8b1;box-shadow:inset 0 0 0 0.6px #e4e6e3;"></div>
<div style="left:512.4px;top:620px;width:126.20000000000005px;height:30.600000000000023px;background:#fff;border:1px solid #b3b8b1;box-shadow:inset 0 0 0 0.6px #e4e6e3;"></div>
<div style="left:771px;top:620px;width:121px;height:30.600000000000023px;background:#fff;border:1px solid #b3b8b1;box-shadow:inset 0 0 0 0.6px #e4e6e3;"></div>
<div style="left:294px;top:660.2px;width:457.20000000000005px;height:30.399999999999977px;background:#fff;border:1px solid #b3b8b1;box-shadow:inset 0 0 0 0.6px #e4e6e3;"></div>
<div style="left:294px;top:699.4px;width:598px;height:30.0px;background:#fff;border:1px solid #b3b8b1;box-shadow:inset 0 0 0 0.6px #e4e6e3;"></div>
<div style="left:294px;top:736.5px;width:598px;height:30.100000000000023px;background:#fff;border:1px solid #b3b8b1;box-shadow:inset 0 0 0 0.6px #e4e6e3;"></div>
<div style="left:294px;top:773.3px;width:598px;height:30.300000000000068px;background:#fff;border:1px solid #b3b8b1;box-shadow:inset 0 0 0 0.6px #e4e6e3;"></div>
<div style="left:294px;top:810.3px;width:598px;height:30.5px;background:#fff;border:1px solid #b3b8b1;box-shadow:inset 0 0 0 0.6px #e4e6e3;"></div>
<div style="left:294px;top:847.4px;width:282.79999999999995px;height:32.200000000000045px;background:#fff;border:1px solid #b3b8b1;box-shadow:inset 0 0 0 0.6px #e4e6e3;"></div>
<div style="left:593.3px;top:847.4px;width:112.60000000000002px;height:32.200000000000045px;background:#fff;border:1px solid #b3b8b1;box-shadow:inset 0 0 0 0.6px #e4e6e3;"></div>
<div style="left:722.4px;top:847.4px;width:169.39999999999998px;height:32.200000000000045px;background:#fff;border:1px solid #b3b8b1;box-shadow:inset 0 0 0 0.6px #e4e6e3;"></div>
<div class="t" style="top:628px;font-size:18px;line-height:18px;right:1767px;margin-right:-0.4px;letter-spacing:0.4px;">Check #:</div>
<div class="t" style="top:628px;font-size:18px;line-height:18px;left:299.7px;letter-spacing:0.5px;">auto</div>
<div class="t" style="top:628px;font-size:18px;line-height:18px;left:458px;letter-spacing:0.2px;">Date:</div>
<div class="t" style="top:628px;font-size:18px;line-height:18px;left:518px;letter-spacing:0.74px;">Apr 30 2024</div>
<svg style="left:644.4px;top:621px;" width="24.2" height="26" viewBox="0 0 24.2 26"><g opacity="0.55"><rect x="0.3" y="2.4" width="23.6" height="23.3" fill="#cfe0c6"/><rect x="0.3" y="2.4" width="23.6" height="4.6" fill="#d78f84"/><rect x="4.4" y="0" width="2" height="4" fill="#6e9d84"/><rect x="17.8" y="0" width="2" height="4" fill="#6e9d84"/><path d="M3.8 11 H20.4 M3.8 15 H20.4 M3.8 19 H20.4 M3.8 23 H20.4 M3.8 11V23 M7.9 11V23 M12.1 11V23 M16.3 11V23 M20.4 11V23" stroke="#b9d1b2" stroke-width="0.9" fill="none"/><rect x="12.6" y="15.4" width="3.2" height="3.2" fill="#6fcfa8"/></g></svg>
<div class="t" style="top:628px;font-size:18px;line-height:18px;left:690.6px;letter-spacing:0.4px;">Amount:</div>
<div class="t" style="top:628px;font-size:18px;line-height:18px;right:1162.4px;margin-right:-0.6px;letter-spacing:0.6px;">1458.00</div>
<div class="t" style="top:668px;font-size:18px;line-height:18px;right:1767px;margin-right:-0.4px;letter-spacing:0.4px;">Vendor:</div>
<div class="t" style="left:300px;top:668px;font-size:18px;line-height:18px;color:#8c8c8c;"><span style="letter-spacing:-0.25px">(GROCERY)</span><span style="letter-spacing:0.38px"> Big City Foodland</span></div>
<div style="left:765.2px;top:665.5px;width:5px;height:5px;background:#585858;border-radius:50%;"></div>
<div style="left:765.2px;top:673.7px;width:5px;height:5px;background:#585858;border-radius:50%;"></div>
<div style="left:765.2px;top:682.0px;width:5px;height:5px;background:#585858;border-radius:50%;"></div>
<div class="t" style="top:668px;font-size:18px;line-height:18px;left:807.5px;color:#8a8993;letter-spacing:0.25px;">List</div>
<svg style="left:860px;top:667px;" width="26" height="19.5" viewBox="0 0 26 19.5"><path d="M19.6 0 V3.6" stroke="#8a6a5a" stroke-width="0.8"/><rect x="0.2" y="2.2" width="17.6" height="11.8" rx="0.6" fill="#5a7a96"/><rect x="0.2" y="13" width="24.8" height="2.6" fill="#4b5478"/><path d="M18.2 3.4 H22.6 L25.4 8.6 V14.2 H18.2Z" fill="#ef5a27"/><path d="M20.4 4.6 H22.4 L24.2 8.4 H20.4Z" fill="#4b5478"/><rect x="24.2" y="10" width="1.6" height="2.6" fill="#ffd9a0"/><circle cx="4.8" cy="15.4" r="3" fill="#4b5478"/><circle cx="4.8" cy="15.4" r="1.2" fill="#a9a7c0"/><circle cx="20.6" cy="15.4" r="3" fill="#4b5478"/><circle cx="20.6" cy="15.4" r="1.2" fill="#a9a7c0"/><rect x="9.5" y="14.6" width="4.6" height="1.8" rx="0.8" fill="#77758e"/></svg>
<div class="t" style="top:707px;font-size:18px;line-height:18px;right:1767px;margin-right:-0.4px;letter-spacing:0.4px;">Written to:</div>
<div class="t" style="top:707px;font-size:18px;line-height:18px;left:299.7px;letter-spacing:0.4px;">Big City Foodland</div>
<div class="t" style="top:743px;font-size:18px;line-height:18px;right:1767px;margin-right:-0.4px;letter-spacing:0.4px;">Address:</div>
<div class="t" style="top:743px;font-size:18px;line-height:18px;left:299.7px;letter-spacing:0.45px;">807 East Woodford Street</div>
<div class="t" style="top:855px;font-size:18px;line-height:18px;left:299.7px;letter-spacing:0.4px;">Big City</div>
<div class="t" style="top:855px;font-size:18px;line-height:18px;left:598.6px;letter-spacing:0.4px;">KY</div>
<div class="t" style="top:855px;font-size:18px;line-height:18px;right:1162px;margin-right:-0.5px;letter-spacing:0.5px;">40123</div>
<div style="left:181.3px;top:889.2px;width:726.6px;height:29px;background:#686779;"></div>
<div class="t" style="top:895px;font-size:18px;line-height:18px;left:188.2px;color:#fff;letter-spacing:0.5px;">Memo</div>
<div style="left:181.3px;top:918.2px;width:726px;height:182px;background:#fff;"></div>
<div style="left:181.3px;top:918.2px;width:1.5px;height:182px;background:#bdbdbd;"></div>
<div style="left:181.3px;top:1100px;width:727px;height:1.6px;background:#b5b5b5;"></div>
<div style="left:906.5px;top:611.5px;width:1.6px;height:277.7px;background:#a7a7aa;"></div>
<div style="left:907.3px;top:918.2px;width:2.4px;height:183px;background:#bcbcbc;"></div>
<div style="left:908px;top:611.5px;width:1142px;height:84.5px;background:#f5f5f5;"></div>
<div class="t" style="top:628px;font-size:18px;line-height:18px;left:918.5px;letter-spacing:0.48px;">Account:</div>
<div style="left:1005.4px;top:620px;width:811.6px;height:31.5px;background:#f6f6f6;border:1.6px solid #c3c3c3;box-shadow:inset 0 0 0 1px #e6e6e6;"></div>
<div class="t" style="top:628px;font-size:18px;line-height:18px;left:1010.6px;letter-spacing:0.55px;">Checking - 1000.A1</div>
<div style="left:1783.5px;top:623px;width:30.6px;height:25.7px;background:#bfbfbf;"></div>
<svg style="left:1791.7px;top:631.6px" width="14" height="9" viewBox="0 0 14 9"><path d="M1.2 1.2 L7 7 L12.8 1.2" fill="none" stroke="#858585" stroke-width="1.9"/></svg>
<div style="left:1833.4px;top:626px;width:103.6px;height:25.8px;background:#3d895e;border-radius:13px;"></div>
<div class="t" style="top:631px;font-size:15px;line-height:15px;left:1848.8px;font-weight:bold;color:#fff;letter-spacing:-0.45px;-webkit-text-stroke:0.45px #fff;">CLEARED</div>
<svg style="left:1950px;top:623px" width="32" height="32" viewBox="0 0 32 32"><path d="M14.5 10.3 H4 V28 H22.8 V18" fill="none" stroke="#000" stroke-width="2.1"/><path d="M13.6 18.8 L27.6 4.8 M17.6 4.6 H28 V15" fill="none" stroke="#000" stroke-width="2.1"/></svg>
<div class="t" style="top:666px;font-size:18px;line-height:18px;left:918.5px;letter-spacing:0.07px;">Balance:</div>
<div class="t" style="top:666px;font-size:18px;line-height:18px;left:1006.8px;color:#8a8a8a;letter-spacing:0.35px;">132,229.52</div>
<div style="left:908px;top:696px;width:1142px;height:28.5px;background:#686779;"></div>
<div class="t" style="top:702px;font-size:18px;line-height:18px;left:915px;color:#fff;letter-spacing:0.45px;">Detail</div>
<div style="left:908px;top:724.5px;width:1.6px;height:377px;background:#b4b4b4;"></div>
<div style="left:909.6px;top:724.5px;width:31px;height:377px;background:#eeeeee;"></div>
<div style="left:940.6px;top:724.5px;width:3px;height:377px;background:#c5c5c5;"></div>
<div style="left:943.6px;top:724.5px;width:1104.7px;height:377px;background:#fff;"></div>
<div style="left:2048.3px;top:724.5px;width:1.7px;height:377px;background:#c4c4c4;"></div>
<div style="left:943.6px;top:724.5px;width:1104.7px;height:31px;background:#f0f0f0;"></div>
<div style="left:1862.65px;top:726px;width:1.45px;height:375px;background:#0a0a0a;"></div>
<div style="left:2009.55px;top:726px;width:1.45px;height:375px;background:#0a0a0a;"></div>
<div style="left:909.6px;top:755.4px;width:1138.7px;height:3.1px;background:#c8c8c8;"></div>
<div style="left:1049.3px;top:729.5px;width:1.3px;height:22px;background:#dcdcdc;"></div>
<div class="t" style="top:732px;font-size:18px;line-height:18px;left:964.2px;letter-spacing:0.48px;">Account</div>
<div class="t" style="top:732px;font-size:18px;line-height:18px;left:956.5px;width:1000px;text-align:center;text-indent:0.45px;letter-spacing:0.45px;">Description</div>
<div class="t" style="top:732px;font-size:18px;line-height:18px;left:1435px;width:1000px;text-align:center;text-indent:0.45px;letter-spacing:0.45px;">Amount</div>
<div style="left:1049.4px;top:758.5px;width:1.7px;height:29px;background:#c6c6c6;"></div>
<div style="left:943.6px;top:787.2px;width:920px;height:1.9px;background:#bdbdbd;"></div>
<div style="left:1864.3px;top:787.2px;width:144.6px;height:1.9px;background:#b9b9b9;"></div>
<div class="t" style="top:765px;font-size:18px;line-height:18px;left:949.4px;letter-spacing:0.5px;">5350</div>
<div class="t" style="top:765px;font-size:18px;line-height:18px;right:44.5px;margin-right:-0.6px;letter-spacing:0.6px;">1458.00</div>
<div style="left:945px;top:792.9px;width:875px;height:20px;background:#f5f5f5;"></div>
<div class="t" style="left:947.5px;top:795px;font-size:18px;line-height:18px;color:#4b4b4b;font-style:italic;"><span style="letter-spacing:0.3px">Miscellaneous Expenses</span><span style="letter-spacing:0.72px"> - 3000.5350.N (0.00)</span></div>
<div style="left:909.6px;top:817.9px;width:1138.7px;height:2.1px;background:#7d7d7d;"></div>
<div style="left:1862.65px;top:817px;width:1.45px;height:4px;background:#0a0a0a;"></div>
<div style="left:2009.55px;top:817px;width:1.45px;height:4px;background:#0a0a0a;"></div>
<svg style="left:911px;top:762.5px;" width="26.4" height="21" viewBox="0 0 26.4 21"><path d="M11.2 17 H15.2 L13.2 19.8Z" fill="#c9c3be"/><rect x="0.5" y="1.5" width="25.4" height="16" rx="1" fill="#e3eaf4" stroke="#cdc7c0" stroke-width="1"/><path d="M13.2 1.8 V17.4" stroke="#d2d6df" stroke-width="1"/><path d="M4 6H10M4 9.2H10M4 12.4H10 M16.4 6H22.4M16.4 9.2H22.4M16.4 12.4H22.4" stroke="#b9bcc4" stroke-width="1.2"/><rect x="13.6" y="0.8" width="2.6" height="3.6" fill="#eb9a9a"/></svg>
<svg style="left:910.5px;top:788.5px" width="28" height="28" viewBox="0 0 28 28"><path d="M3 3 L25 25 M25 3 L3 25" stroke="#e9a3a3" stroke-width="4.6"/></svg>
<svg style="left:2018.5px;top:773.5px;" width="26" height="26" viewBox="0 0 28 28"><path d="M11.41 4.65 L11.89 1.68 L16.11 1.68 L16.59 4.65 L18.78 5.56 L21.22 3.79 L24.21 6.78 L22.44 9.22 L23.35 11.41 L26.32 11.89 L26.32 16.11 L23.35 16.59 L22.44 18.78 L24.21 21.22 L21.22 24.21 L18.78 22.44 L16.59 23.35 L16.11 26.32 L11.89 26.32 L11.41 23.35 L9.22 22.44 L6.78 24.21 L3.79 21.22 L5.56 18.78 L4.65 16.59 L1.68 16.11 L1.68 11.89 L4.65 11.41 L5.56 9.22 L3.79 6.78 L6.78 3.79 L9.22 5.56Z M18.6 14 A4.6 4.6 0 1 0 9.4 14 A4.6 4.6 0 1 0 18.6 14Z" fill="#696969" fill-rule="evenodd"/><path d="M11.41 4.65 L11.89 1.68 L16.11 1.68 L16.59 4.65 L18.78 5.56 L21.22 3.79 L24.21 6.78 L22.44 9.22 L23.35 11.41 L26.32 11.89 L26.32 16.11 L23.35 16.59 L22.44 18.78 L24.21 21.22 L21.22 24.21 L18.78 22.44 L16.59 23.35 L16.11 26.32 L11.89 26.32 L11.41 23.35 L9.22 22.44 L6.78 24.21 L3.79 21.22 L5.56 18.78 L4.65 16.59 L1.68 16.11 L1.68 11.89 L4.65 11.41 L5.56 9.22 L3.79 6.78 L6.78 3.79 L9.22 5.56Z" fill="none" stroke="#696969" stroke-width="2.2" stroke-linejoin="round"/></svg>
<div style="left:909.6px;top:1060.5px;width:31px;height:40.6px;background:#ececec;"></div>
<div style="left:943.6px;top:1060.5px;width:1104.7px;height:40.6px;background:#ececec;"></div>
<div style="left:1862.65px;top:1060.5px;width:1.45px;height:40.6px;background:#0a0a0a;"></div>
<div style="left:2009.55px;top:1060.5px;width:1.45px;height:40.6px;background:#0a0a0a;"></div>
<div style="left:909.6px;top:1057.4px;width:1138.7px;height:3.1px;background:#c2c2c2;"></div>
<div style="left:950px;top:1067px;width:145.2px;height:29px;background:#f5f5f5;"></div>
<div class="t" style="top:1073px;font-size:18.5px;line-height:18.5px;left:965.2px;color:#8b8b8b;letter-spacing:0.04px;">Add Line Item</div>
<div class="t" style="top:1070px;font-size:18px;line-height:18px;right:196.4px;margin-right:-0.4px;letter-spacing:0.4px;">Total:</div>
<div style="left:1871px;top:1067px;width:129.2px;height:21px;background:#f5f5f5;"></div>
<div class="t" style="top:1070px;font-size:18px;line-height:18px;right:51.5px;margin-right:-0.6px;letter-spacing:0.6px;">1,458.00</div>
<div style="left:908px;top:1101px;width:1142px;height:1.2px;background:#b9b9b9;"></div>
<div style="left:180.5px;top:1102px;width:1870px;height:44px;background:#fcebe8;"></div>
<svg style="left:201.1px;top:1110px;" width="26" height="26" viewBox="0 0 26 26"><circle cx="13" cy="13" r="13" fill="#bf2e25"/><rect x="11.7" y="5.6" width="2.7" height="9.6" rx="1.2" fill="#fff"/><circle cx="13.05" cy="19.2" r="1.7" fill="#fff"/></svg>
<div class="t" style="top:1116px;font-size:18px;line-height:18px;left:243.4px;font-weight:bold;color:#4a0d0a;letter-spacing:0.4px;">This entry cannot be deleted because one or more line items is cleared on a bank reconciliation.</div>
</div></div>
</body></html>
